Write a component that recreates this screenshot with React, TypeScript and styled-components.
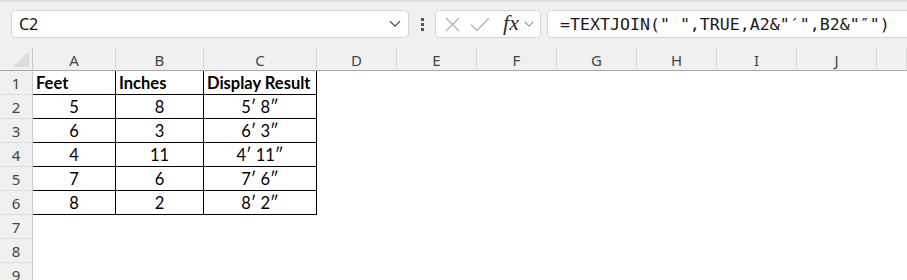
import React from "react";
import styled, { createGlobalStyle } from "styled-components";

const GlobalStyle = createGlobalStyle`
  html, body { margin: 0; padding: 0; }
  body {
    width: 907px;
    height: 280px;
    overflow: hidden;
    background: #ffffff;
    font-family: "Noto Sans", Arial, sans-serif;
  }
`;

const Page = styled.div`
  width: 907px;
  height: 280px;
  overflow: hidden;
  display: flex;
  flex-direction: column;
`;

const Toolbar = styled.div`
  height: 48px;
  flex: none;
  box-sizing: border-box;
  padding: 10px 0 0 11px;
  background: #f0f0f0;
  display: flex;
  align-items: flex-start;
  overflow: hidden;
  box-shadow: inset 0 4px 3px -3px rgba(0, 0, 0, 0.12);
`;

const Box = styled.div`
  height: 28px;
  flex: none;
  box-sizing: border-box;
  background: #ffffff;
  border: 1px solid #d4d4d4;
  border-radius: 5px;
  display: flex;
  align-items: center;
`;

const NameBox = styled(Box)`
  width: 398px;
  padding: 0 7px 0 7px;
  justify-content: space-between;
  font-family: "Noto Sans", Arial, sans-serif;
  font-size: 16px;
  color: #111;
`;

const Dots = styled.div`
  width: 26px;
  height: 28px;
  flex: none;
  display: flex;
  flex-direction: column;
  align-items: center;
  justify-content: center;
  gap: 2px;
`;

const Dot = styled.span`
  width: 3px;
  height: 3px;
  background: #555;
`;

const FxGroup = styled(Box)`
  width: 106px;
  padding-left: 8px;
`;

const IconSlot = styled.div<{ $w: number }>`
  width: ${(p) => p.$w}px;
  flex: none;
  display: flex;
  align-items: center;
  justify-content: center;
`;

const FxText = styled.span`
  font-family: "Liberation Serif", "Times New Roman", serif;
  font-style: italic;
  font-weight: 400;
  font-size: 22px;
  color: #2b2b2b;
  line-height: 1;
  margin-top: -3px;
`;

const FormulaBox = styled(Box)`
  margin-left: 6px;
  margin-right: -12px;
  flex: 1 1 auto;
  min-width: 0;
  padding-left: 12px;
  font-family: "DejaVu Sans Mono", "Liberation Mono", monospace;
  font-size: 16.6px;
  color: #1a1a1a;
  white-space: pre;
  overflow: hidden;
`;

const Grid = styled.div`
  display: grid;
  grid-template-columns: 33px 83px 88px 113px repeat(7, 80px) 30px;
  grid-template-rows: 23px repeat(9, 24px);
  background: #ffffff;
`;

const Corner = styled.div`
  background: #f0f0f0;
  border-right: 1px solid #c9c9c9;
  border-bottom: 1px solid #a8a8a8;
  position: relative;
  &::after {
    content: "";
    position: absolute;
    right: 3px;
    bottom: 3px;
    width: 0;
    height: 0;
    border-left: 16px solid transparent;
    border-bottom: 16px solid #dcdcdc;
  }
`;

const ColHead = styled.div`
  background: #f0f0f0;
  border-right: 1px solid #d9d9d9;
  border-bottom: 1px solid #a8a8a8;
  display: flex;
  align-items: center;
  justify-content: center;
  font-family: "Noto Sans", Arial, sans-serif;
  font-size: 15px;
  color: #444;
  padding-top: 2px;
  box-sizing: border-box;
`;

const RowHead = styled.div`
  background: #f0f0f0;
  border-right: 1px solid #c9c9c9;
  border-bottom: 1px solid #dddddd;
  display: flex;
  align-items: center;
  justify-content: center;
  font-family: "Noto Sans", Arial, sans-serif;
  font-size: 15px;
  color: #444;
  box-sizing: border-box;
`;

const Cell = styled.div<{ $bordered?: boolean; $head?: boolean }>`
  box-sizing: border-box;
  border-right: 1px solid ${(p) => (p.$bordered ? "#000" : "transparent")};
  border-bottom: 1px solid ${(p) => (p.$bordered ? "#000" : "transparent")};
  display: flex;
  align-items: center;
  justify-content: ${(p) => (p.$head ? "flex-start" : "center")};
  padding-left: ${(p) => (p.$head ? "3px" : "0")};
  font-family: Lato, "Open Sans", sans-serif;
  font-size: 16.5px;
  font-weight: ${(p) => (p.$head ? 700 : 400)};
  color: #000;
  white-space: nowrap;
`;

const cols = ["A", "B", "C", "D", "E", "F", "G", "H", "I", "J", ""];

const data: string[][] = [
  ["Feet", "Inches", "Display Result"],
  ["5", "8", "5\u2032 8\u2033"],
  ["6", "3", "6\u2032 3\u2033"],
  ["4", "11", "4\u2032 11\u2033"],
  ["7", "6", "7\u2032 6\u2033"],
  ["8", "2", "8\u2032 2\u2033"],
];

const Chevron = ({ color = "#444", w = 12 }: { color?: string; w?: number }) => (
  <svg width={w} height={w * 0.6} viewBox="0 0 12 7">
    <polyline points="1,1 6,6 11,1" fill="none" stroke={color} strokeWidth="1.3" />
  </svg>
);

export default function App() {
  const rows = Array.from({ length: 9 }, (_, i) => i + 1);
  return (
    <>
      <GlobalStyle />
      <Page>
        <Toolbar>
          <NameBox>
            <span>C2</span>
            <Chevron />
          </NameBox>
          <Dots>
            <Dot />
            <Dot />
            <Dot />
          </Dots>
          <FxGroup>
            <IconSlot $w={16}>
              <svg width="15" height="15" viewBox="0 0 15 15">
                <path d="M1 1 L14 14 M14 1 L1 14" stroke="#b3b3b3" strokeWidth="1.3" fill="none" />
              </svg>
            </IconSlot>
            <IconSlot $w={40}>
              <svg width="20" height="15" viewBox="0 0 20 15">
                <polyline points="1,7.5 7,13.5 19,1" stroke="#b3b3b3" strokeWidth="1.3" fill="none" />
              </svg>
            </IconSlot>
            <IconSlot $w={22}>
              <FxText>fx</FxText>
            </IconSlot>
            <IconSlot $w={14}>
              <Chevron color="#888" w={10} />
            </IconSlot>
          </FxGroup>
          <FormulaBox>{'=TEXTJOIN(" ",TRUE,A2&"\u2032",B2&"\u2033")'}</FormulaBox>
        </Toolbar>
        <Grid>
          <Corner />
          {cols.map((c, i) => (
            <ColHead key={i}>{c}</ColHead>
          ))}
          {rows.map((r) => (
            <React.Fragment key={r}>
              <RowHead>{r}</RowHead>
              {cols.map((c, ci) => {
                const inTable = r <= 6 && ci < 3;
                return (
                  <Cell key={ci} $bordered={inTable} $head={inTable && r === 1}>
                    {inTable ? data[r - 1][ci] : ""}
                  </Cell>
                );
              })}
            </React.Fragment>
          ))}
        </Grid>
      </Page>
    </>
  );
}
